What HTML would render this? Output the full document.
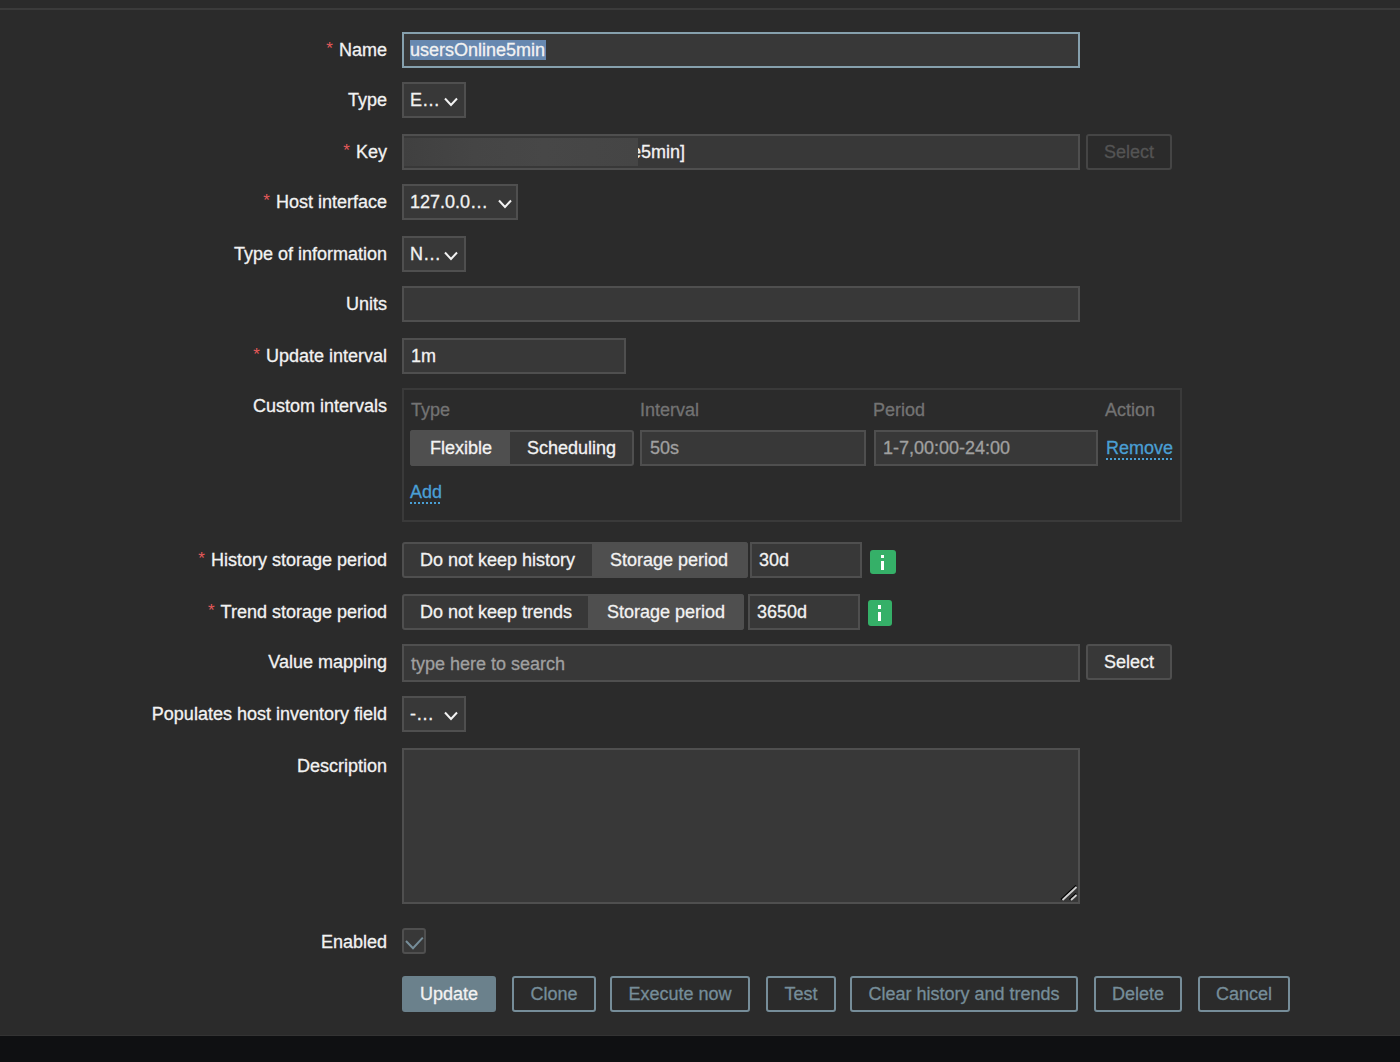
<!DOCTYPE html>
<html><head><meta charset="utf-8">
<style>
*{box-sizing:border-box;margin:0;padding:0}
html,body{width:1400px;height:1062px;overflow:hidden;background:#2b2b2b;font-family:"Liberation Sans",sans-serif;font-size:18px;color:#f2f2f2;-webkit-text-stroke:0.3px currentColor}
.a{position:absolute}
.topline{left:0;top:8px;width:1400px;height:2px;background:#3b3b3b}
.bottom{left:0;top:1036px;width:1400px;height:26px;background:#0f1012}
.bline{left:0;top:1035px;width:1400px;height:1px;background:#333}
.lbl{position:absolute;right:1013px;white-space:nowrap;line-height:36px;height:36px;text-align:right}
.req::before{content:"*";color:#e45959;margin-right:6px;font-size:17px;-webkit-text-stroke:0;position:relative;top:-2px}
.inp{position:absolute;background:#383838;border:2px solid #4f4f4f;height:36px}
.txt{position:absolute;white-space:nowrap;line-height:20px}
.sel{position:absolute;background:#383838;border:2px solid #4f4f4f;height:36px}
.chev{position:absolute;width:14px;height:9px}
.btnd{position:absolute;border:2px solid #454545;border-radius:3px;color:#545454;text-align:center;line-height:32px}
.seg{position:absolute;border:2px solid #4f4f4f;border-radius:3px;background:#383838;height:36px}
.seg .on{position:absolute;top:-2px;bottom:-2px;background:#4f4f4f}
.th{position:absolute;color:#737373;line-height:20px;white-space:nowrap}
.ph{color:#a0a0a0}
.link{position:absolute;color:#4a9fd4;line-height:20px;white-space:nowrap}
.link::after{content:"";position:absolute;left:0;right:0;top:20px;height:2px;background-image:linear-gradient(to right,#4a9fd4 50%,transparent 50%);background-size:4px 2px}
.info{position:absolute;width:26px;height:24px;background:#35b068;border-radius:3px}
.info i{position:absolute;width:3px;background:#fff}
.btn{position:absolute;top:976px;height:36px;border:2px solid #768d99;border-radius:3px;color:#768d99;text-align:center;line-height:32px;white-space:nowrap}
</style></head><body>
<div class="a topline"></div>

<!-- Name -->
<div class="lbl req" style="top:32px">Name</div>
<div class="inp" style="left:402px;top:32px;width:678px;border-color:#86a0ad"></div>
<div class="a" style="left:410px;top:40px;width:136px;height:20px;background:#6788b0"></div>
<div class="txt" style="left:410px;top:40px">usersOnline5min</div>

<!-- Type -->
<div class="lbl" style="top:82px">Type</div>
<div class="sel" style="left:402px;top:82px;width:64px"></div>
<div class="txt" style="left:410px;top:90px">E…</div>
<svg class="a" style="left:444px;top:97px" width="14" height="12" viewBox="0 0 14 12"><polyline points="1,1.5 7,8 13,1.5" fill="none" stroke="#f2f2f2" stroke-width="2"/></svg>

<!-- Key -->
<div class="lbl req" style="top:134px">Key</div>
<div class="inp" style="left:402px;top:134px;width:678px"></div>
<div class="txt" style="left:631px;top:142px">e5min]</div>
<div class="a" style="left:404px;top:138px;width:234px;height:28px;background:linear-gradient(to right,#404040 0%,#454545 30%,#474747 60%,#454545 100%)"></div>
<div class="btnd" style="left:1086px;top:134px;width:86px;height:36px">Select</div>

<!-- Host interface -->
<div class="lbl req" style="top:184px">Host interface</div>
<div class="sel" style="left:402px;top:184px;width:116px"></div>
<div class="txt" style="left:410px;top:192px">127.0.0…</div>
<svg class="a" style="left:498px;top:199px" width="14" height="12" viewBox="0 0 14 12"><polyline points="1,1.5 7,8 13,1.5" fill="none" stroke="#f2f2f2" stroke-width="2"/></svg>

<!-- Type of information -->
<div class="lbl" style="top:236px">Type of information</div>
<div class="sel" style="left:402px;top:236px;width:64px"></div>
<div class="txt" style="left:410px;top:244px">N…</div>
<svg class="a" style="left:444px;top:251px" width="14" height="12" viewBox="0 0 14 12"><polyline points="1,1.5 7,8 13,1.5" fill="none" stroke="#f2f2f2" stroke-width="2"/></svg>

<!-- Units -->
<div class="lbl" style="top:286px">Units</div>
<div class="inp" style="left:402px;top:286px;width:678px"></div>

<!-- Update interval -->
<div class="lbl req" style="top:338px">Update interval</div>
<div class="inp" style="left:402px;top:338px;width:224px"></div>
<div class="txt" style="left:411px;top:346px">1m</div>

<!-- Custom intervals -->
<div class="lbl" style="top:388px">Custom intervals</div>
<div class="a" style="left:402px;top:388px;width:780px;height:134px;border:2px solid #3a3a3a"></div>
<div class="th" style="left:411px;top:400px">Type</div>
<div class="th" style="left:640px;top:400px">Interval</div>
<div class="th" style="left:873px;top:400px">Period</div>
<div class="th" style="left:1105px;top:400px">Action</div>
<div class="seg" style="left:410px;top:430px;width:224px"><div class="on" style="left:-2px;width:100px;border-radius:3px 0 0 3px"></div></div>
<div class="txt" style="left:430px;top:438px">Flexible</div>
<div class="txt" style="left:527px;top:438px">Scheduling</div>
<div class="inp" style="left:640px;top:430px;width:226px"></div>
<div class="txt ph" style="left:650px;top:438px">50s</div>
<div class="inp" style="left:874px;top:430px;width:224px"></div>
<div class="txt ph" style="left:883px;top:438px">1-7,00:00-24:00</div>
<div class="link" style="left:1106px;top:438px">Remove</div>
<div class="link" style="left:410px;top:482px">Add</div>

<!-- History -->
<div class="lbl req" style="top:542px">History storage period</div>
<div class="seg" style="left:402px;top:542px;width:346px"><div class="on" style="left:188px;right:-2px;border-radius:0 3px 3px 0"></div></div>
<div class="txt" style="left:420px;top:550px">Do not keep history</div>
<div class="txt" style="left:610px;top:550px">Storage period</div>
<div class="inp" style="left:750px;top:542px;width:112px"></div>
<div class="txt" style="left:759px;top:550px">30d</div>
<div class="info" style="left:870px;top:550px;width:26px;height:24px"><i style="left:11px;top:5px;height:3px"></i><i style="left:11px;top:11px;height:9px"></i></div>

<!-- Trend -->
<div class="lbl req" style="top:594px">Trend storage period</div>
<div class="seg" style="left:402px;top:594px;width:342px"><div class="on" style="left:184px;right:-2px;border-radius:0 3px 3px 0"></div></div>
<div class="txt" style="left:420px;top:602px">Do not keep trends</div>
<div class="txt" style="left:607px;top:602px">Storage period</div>
<div class="inp" style="left:748px;top:594px;width:112px"></div>
<div class="txt" style="left:757px;top:602px">3650d</div>
<div class="info" style="left:868px;top:600px;width:24px;height:26px"><i style="left:10px;top:5px;height:4px"></i><i style="left:10px;top:12px;height:9px"></i></div>

<!-- Value mapping -->
<div class="lbl" style="top:644px">Value mapping</div>
<div class="inp" style="left:402px;top:644px;width:678px;height:38px"></div>
<div class="txt ph" style="left:411px;top:654px">type here to search</div>
<div class="btnd" style="left:1086px;top:644px;width:86px;height:36px;background:#383838;border-color:#4f4f4f;color:#f2f2f2">Select</div>

<!-- Inventory -->
<div class="lbl" style="top:696px">Populates host inventory field</div>
<div class="sel" style="left:402px;top:696px;width:64px"></div>
<div class="txt" style="left:410px;top:704px">-…</div>
<svg class="a" style="left:444px;top:711px" width="14" height="12" viewBox="0 0 14 12"><polyline points="1,1.5 7,8 13,1.5" fill="none" stroke="#f2f2f2" stroke-width="2"/></svg>

<!-- Description -->
<div class="lbl" style="top:748px">Description</div>
<div class="inp" style="left:402px;top:748px;width:678px;height:156px"></div>

<svg class="a" style="left:1056px;top:882px" width="24" height="24" viewBox="0 0 24 24"><line x1="5" y1="17.5" x2="20" y2="3.5" stroke="#000" stroke-width="1.6"/><line x1="6.5" y1="18" x2="20.5" y2="5" stroke="#d0d0d0" stroke-width="1.8"/><line x1="13.5" y1="17.5" x2="20" y2="11.5" stroke="#000" stroke-width="1.6"/><line x1="15" y1="18" x2="20.5" y2="13" stroke="#d0d0d0" stroke-width="1.8"/></svg>
<!-- Enabled -->
<div class="lbl" style="top:924px">Enabled</div>
<div class="a" style="left:402px;top:928px;width:24px;height:26px;background:#383838;border:2px solid #4f4f4f;border-radius:3px"></div>
<svg class="a" style="left:400px;top:930px" width="30" height="24" viewBox="0 0 30 24"><polyline points="6,11 13,18.3 22.8,7.6" fill="none" stroke="#768d99" stroke-width="2"/></svg>

<!-- Buttons -->
<div class="btn" style="left:402px;width:94px;background:#6b818c;border-color:#6b818c;color:#f2f2f2">Update</div>
<div class="btn" style="left:512px;width:84px">Clone</div>
<div class="btn" style="left:610px;width:140px">Execute now</div>
<div class="btn" style="left:766px;width:70px">Test</div>
<div class="btn" style="left:850px;width:228px">Clear history and trends</div>
<div class="btn" style="left:1094px;width:88px">Delete</div>
<div class="btn" style="left:1198px;width:92px">Cancel</div>

<div class="a bline"></div>
<div class="a bottom"></div>
</body></html>
